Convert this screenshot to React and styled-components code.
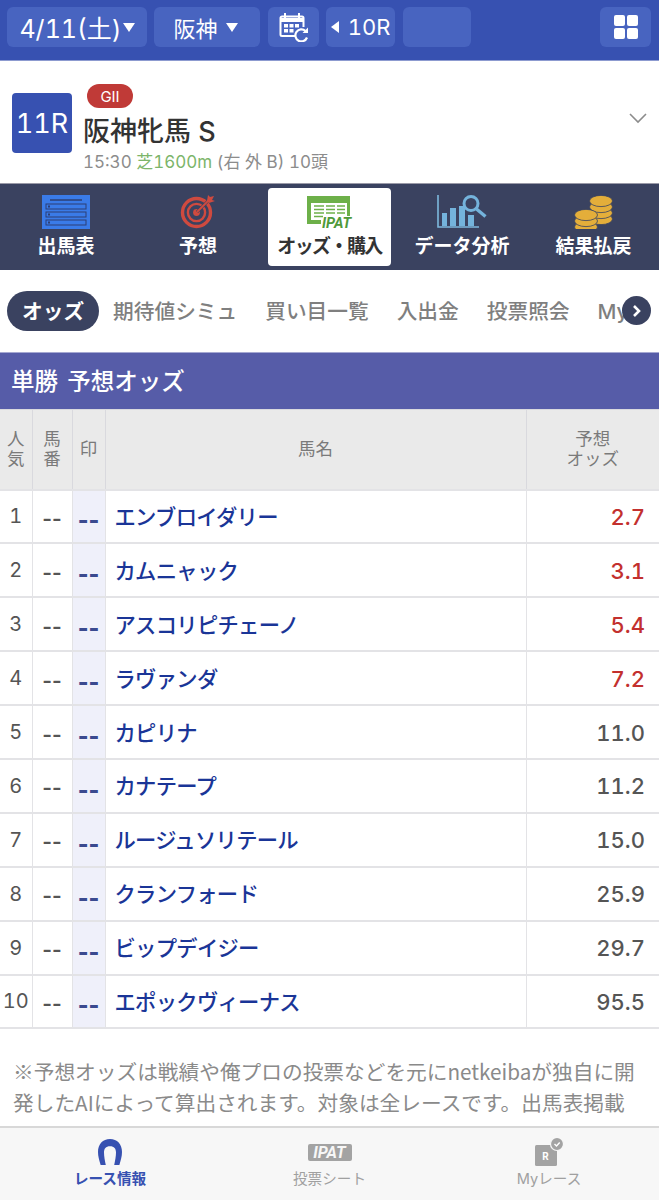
import React from "react";
import styled, { createGlobalStyle } from "styled-components";

const Global = createGlobalStyle`
  html, body { margin: 0; padding: 0; background: #fff; }
  body {
    font-family: "Inter", "Noto Sans CJK JP", "Noto Sans", sans-serif;
    font-variant-numeric: tabular-nums;
    width: 659px;
    height: 1200px;
    overflow: hidden;
  }
  * { box-sizing: border-box; }
`;

const Page = styled.div`
  position: relative;
  width: 659px;
  height: 1200px;
  overflow: hidden;
`;

const TopBar = styled.div`
  height: 61px;
  background: #3751b1;
  display: flex;
  padding: 7px 8px 0 7px;
  gap: 7px;
  border-bottom: 1px solid #8d9bd0;
`;
const TopBtn = styled.div`
  width: ${(p) => p.$w}px;
  height: 40px;
  margin-left: ${(p) => p.$ml || 0}px;
  padding-right: ${(p) => p.$pr || 0}px;
  background: #4864c0;
  border-radius: 6px;
  display: flex;
  align-items: center;
  justify-content: center;
  gap: ${(p) => p.$gap || 0}px;
  color: #fff;
  font-size: ${(p) => p.$size || 22}px;
`;
const TriDown = styled.span`
  width: 0;
  height: 0;
  border-left: 6px solid transparent;
  border-right: 6px solid transparent;
  border-top: 9px solid #fff;
`;
const TriLeft = styled.span`
  width: 0;
  height: 0;
  border-top: 6px solid transparent;
  border-bottom: 6px solid transparent;
  border-right: 8px solid #fff;
`;

const RaceHead = styled.div`
  height: 122px;
  padding: 23px 12px 0 12px;
  display: flex;
  position: relative;
`;
const RaceNum = styled.div`
  width: 60px;
  height: 60px;
  margin-top: 9px;
  background: #3751b1;
  border-radius: 4px;
  color: #fff;
  font-size: 27px;
  display: flex;
  align-items: center;
  justify-content: center;
`;
const RaceInfo = styled.div`
  margin-left: 11px;
`;
const Grade = styled.div`
  width: 46px;
  height: 24px;
  margin-left: 4px;
  border-radius: 12px;
  background: #c03a37;
  color: #fff;
  font-size: 15px;
  display: flex;
  align-items: center;
  justify-content: center;
`;
const RaceName = styled.div`
  font-size: 27px;
  line-height: 36px;
  margin-top: 6px;
  font-weight: 500;
  color: #333;
  white-space: nowrap;
`;
const RaceMeta = styled.div`
  font-size: 17px;
  line-height: 22px;
  margin-top: 1px;
  color: #8c8c8c;
  white-space: nowrap;
`;
const Green = styled.span`
  color: #7cb56a;
`;
const Chevron = styled.svg`
  position: absolute;
  right: 12px;
  top: 51px;
`;

const Nav = styled.div`
  height: 87px;
  background: #3a4260;
  display: grid;
  grid-template-columns: 132px 132px 132px 132px 131px;
  padding-top: 4px;
  border-top: 1px solid #9a9aa8;
`;
const NavItem = styled.div`
  height: 78px;
  margin: ${(p) => (p.$active ? "0 5px 0 4px" : "0")};
  border-radius: 4px;
  background: ${(p) => (p.$active ? "#fff" : "transparent")};
  color: ${(p) => (p.$active ? "#333" : "#fff")};
  font-size: 19px;
  font-weight: 700;
  display: flex;
  flex-direction: column;
  align-items: center;
  white-space: nowrap;
`;
const NavIcon = styled.div`
  height: 41px;
  display: flex;
  align-items: flex-end;
  justify-content: center;
`;
const NavLabel = styled.div`
  line-height: 26px;
  margin-top: 5px;
  letter-spacing: ${(p) => (p.$tight ? "-1.600px" : "0")};
`;

const SubTabs = styled.div`
  height: 82px;
  position: relative;
  padding: 21px 0 0 7px;
`;
const SubTrack = styled.div`
  width: 628px;
  display: flex;
  overflow: hidden;
  white-space: nowrap;
`;
const SubTab = styled.div`
  flex: none;
  height: 40px;
  padding: 0 ${(p) => (p.$active ? "15px" : "14px")};
  border-radius: 20px;
  background: ${(p) => (p.$active ? "#3a4260" : "transparent")};
  color: ${(p) => (p.$active ? "#fff" : "#7f7f7f")};
  font-size: 20.700px;
  font-weight: ${(p) => (p.$active ? 700 : 500)};
  line-height: 42px;
`;
const ScrollBtn = styled.div`
  position: absolute;
  left: 622px;
  top: 26px;
  width: 29px;
  height: 29px;
  border-radius: 50%;
  background: #3a4260;
  display: flex;
  align-items: center;
  justify-content: center;
`;

const TitleBar = styled.div`
  height: 57px;
  background: #565ca8;
  border-top: 1px solid #a5a8d2;
  color: #fff;
  font-size: 23.500px;
  font-weight: 500;
  padding-left: 11px;
  line-height: 57px;
  word-spacing: 3px;
`;

const Table = styled.table`
  width: 659px;
  table-layout: fixed;
  border-collapse: collapse;
`;
const Th = styled.th`
  height: 80px;
  padding: 0;
  background: #eaeaea;
  border: 1px solid #d9d9de;
  border-left: ${(p) => (p.$first ? "none" : "1px solid #d9d9de")};
  border-right: ${(p) => (p.$last ? "none" : "1px solid #d9d9de")};
  color: #7a7a7a;
  font-size: 17.500px;
  font-weight: 400;
  line-height: 20px;
  text-align: center;
`;
const Td = styled.td`
  height: 53.900px;
  padding: 0;
  border: 2px solid #e3e3e6;
  border-width: 2px 1.500px;
  border-left: ${(p) => (p.$first ? "none" : "")};
  border-right: ${(p) => (p.$last ? "none" : "")};
  text-align: center;
  color: #555;
  font-size: 20px;
`;
const DashCell = styled(Td)`
  font-variant-numeric: normal;
  font-feature-settings: "calt" 0;
  font-size: 21px;
  font-weight: 600;
  padding-top: 4px;
`;
const MarkCell = styled(Td)`
  background: #eff0fa;
  color: #3a4a8f;
  font-variant-numeric: normal;
  font-feature-settings: "calt" 0;
  font-size: 23px;
  font-weight: 800;
  padding-top: 8px;
`;
const NameCell = styled(Td)`
  text-align: left;
  padding: 0 0 2px 9px;
  color: #1a3597;
  font-size: 21.300px;
  letter-spacing: -0.700px;
  font-weight: 500;
  white-space: nowrap;
`;
const OddsCell = styled(Td)`
  text-align: right;
  padding: 1px 14px 0 0;
  font-size: 22px;
  font-weight: 500;
  color: ${(p) => (p.$hot ? "#c3302e" : "#555")};
`;

const Note = styled.p`
  margin: 27px 12px 0 13px;
  color: #8a8a8a;
  font-family: "Noto Sans CJK JP", sans-serif;
  font-size: 20.700px;
  line-height: 31px;
`;

const Footer = styled.div`
  position: absolute;
  left: 0;
  right: 0;
  bottom: 0;
  height: 74px;
  background: #f7f7f7;
  border-top: 2px solid #d8d8d8;
  display: grid;
  grid-template-columns: 220px 219px 220px;
`;
const FootItem = styled.div`
  display: flex;
  flex-direction: column;
  align-items: center;
  color: ${(p) => (p.$active ? "#3751b1" : "#a0a0a0")};
  font-size: 14.600px;
  font-weight: ${(p) => (p.$active ? 700 : 400)};
`;
const FootIcon = styled.div`
  height: 38px;
  display: flex;
  align-items: flex-end;
  justify-content: center;
`;
const FootLabel = styled.div`
  line-height: 20px;
  margin-top: 3px;
`;

const CalendarIcon = () => (
  <svg width="30" height="30" viewBox="0 0 30 30" fill="none" stroke="#fff" strokeWidth="2">
    <path d="M16 24H3a1.500 1.500 0 0 1-1.500-1.500V6A1.500 1.500 0 0 1 3 4.500h20A1.500 1.500 0 0 1 24.500 6v9" />
    <path d="M1.500 8h23" strokeWidth="4" />
    <path d="M6 1v6M20 1v6" />
    <path
      d="M5 12h4v3.500H5zM10.500 12h4v3.500h-4zM16 12h4v3.500h-4zM5 17h4v3.500H5zM10.500 17h4v3.500h-4z"
      fill="#fff"
      stroke="none"
    />
    <path d="M28 25.500a6 6 0 1 1-1.500-6.500" strokeWidth="2.200" />
    <path d="M29 15.500v5.500h-5.500z" fill="#fff" stroke="none" />
  </svg>
);

const GridIcon = () => (
  <svg width="24" height="24" viewBox="0 0 24 24" fill="#fff">
    <rect x="0" y="0" width="11" height="11" rx="2" />
    <rect x="13" y="0" width="11" height="11" rx="2" />
    <rect x="0" y="13" width="11" height="11" rx="2" />
    <rect x="13" y="13" width="11" height="11" rx="2" />
  </svg>
);

const ListIcon = () => (
  <svg width="48" height="34" viewBox="0 0 48 34">
    <rect width="48" height="34" fill="#3a7be8" />
    <g fill="none" stroke="#2c3f74" strokeWidth="1">
      <path d="M8 5h32" strokeWidth="1.500" />
      <rect x="4" y="9" width="40" height="5" />
      <rect x="4" y="17" width="40" height="5" />
      <rect x="4" y="25" width="40" height="5" />
    </g>
    <g fill="#2c3f74">
      <rect x="6" y="10.500" width="2" height="2" />
      <rect x="6" y="18.500" width="2" height="2" />
      <rect x="6" y="26.500" width="2" height="2" />
    </g>
  </svg>
);

const TargetIcon = () => (
  <svg width="36" height="36" viewBox="0 0 36 36" fill="none" stroke="#cf4a3f">
    <circle cx="16.500" cy="19.500" r="14" strokeWidth="3.400" />
    <circle cx="16.500" cy="19.500" r="8.600" strokeWidth="2.400" />
    <circle cx="16.500" cy="19.500" r="3.400" fill="#cf4a3f" stroke="none" />
    <path d="M17 19L30 6" stroke="#3a4260" strokeWidth="3" />
    <path d="M17 19L29 7" strokeWidth="1.800" />
    <path d="M27 8l1-6 2 2 4-1-2 4 3 1-6 2z" fill="#cf4a3f" stroke="none" />
  </svg>
);

const IpatSheetIcon = () => (
  <svg width="46" height="33" viewBox="0 0 46 33">
    <path d="M0 0h43v20h-3V7H4v17h10v4H0z" fill="#6db049" />
    <g fill="none" stroke="#6db049" strokeWidth="1.700">
      <path d="M7 10h10M19 10h9M30 10h8M7 13.500h10M19 13.500h9M30 13.500h8M7 17h10M19 17h9M30 17h8M7 20.500h9" />
    </g>
    <text x="15" y="32" fontFamily="Roboto, sans-serif" fontSize="14.500" fontWeight="700" fontStyle="italic" fill="#4f9a3a">
      IPAT
    </text>
  </svg>
);

const ChartIcon = () => (
  <svg width="50" height="34" viewBox="0 0 50 34">
    <path d="M1 0v32h41" fill="none" stroke="#7db8dd" strokeWidth="1.600" />
    <g fill="#74b3dc">
      <rect x="5" y="18" width="5" height="13" />
      <rect x="13" y="13" width="6" height="18" />
      <rect x="22" y="11" width="6" height="20" />
      <rect x="31" y="20" width="6" height="11" />
    </g>
    <circle cx="34" cy="8.500" r="7" fill="#3a4260" stroke="#74b3dc" strokeWidth="3" />
    <path d="M39.500 14l9 7.500" stroke="#74b3dc" strokeWidth="3.400" />
  </svg>
);

const CoinStack = ({ x, y, n }) => (
  <g>
    {Array.from({ length: n }).map((_, i) => (
      <ellipse key={i} cx={x} cy={y + (n - 1 - i) * 6} rx="11.500" ry="5.600" fill="#e4ae3a" stroke="#3a4260" strokeWidth="0.800" />
    ))}
  </g>
);

const CoinsIcon = () => (
  <svg width="40" height="34" viewBox="0 0 40 34">
    <CoinStack x={27} y={6} n={4} />
    <CoinStack x={12} y={20} n={3} />
  </svg>
);

const HorseshoeIcon = () => (
  <svg width="24" height="27" viewBox="0 0 20 28" preserveAspectRatio="none">
    <path
      d="M6.500 27H2.200C1 22 0 18 0 13.500 0 5.500 4 0 10 0s10 5.500 10 13.500c0 4.500-1 8.500-2.200 13.500h-4.300c.7-4 1.500-9 1.500-13 0-4-1.500-6.500-5-6.500s-5 2.500-5 6.500c0 4 .8 9 1.500 13z"
      fill="#3751b1"
    />
  </svg>
);

const IpatTag = styled.div`
  width: 44px;
  height: 17px;
  margin-bottom: 5px;
  background: #a3a3a3;
  border-radius: 2px;
  color: #f7f7f7;
  font-family: "Roboto", sans-serif;
  font-size: 16px;
  font-weight: 700;
  font-style: italic;
  line-height: 17px;
  text-align: center;
`;

const MyRaceIcon = () => (
  <svg width="30" height="28" viewBox="0 0 30 28">
    <rect x="1" y="7" width="22" height="21" rx="1.500" fill="#a3a3a3" />
    <text x="11.500" y="22" textAnchor="middle" fontFamily="Roboto, sans-serif" fontSize="10" fontWeight="700" fill="#fff">
      R
    </text>
    <circle cx="23" cy="6" r="6.500" fill="#a3a3a3" stroke="#f7f7f7" strokeWidth="1.200" />
    <path d="M20.500 6l2 2 3.200-3.500" fill="none" stroke="#fff" strokeWidth="1.400" />
  </svg>
);

const horses = [
  ["エンブロイダリー", "2.7", true],
  ["カムニャック", "3.1", true],
  ["アスコリピチェーノ", "5.4", true],
  ["ラヴァンダ", "7.2", true],
  ["カピリナ", "11.0"],
  ["カナテープ", "11.2"],
  ["ルージュソリテール", "15.0"],
  ["クランフォード", "25.9"],
  ["ビップデイジー", "29.7"],
  ["エポックヴィーナス", "95.5"],
];

export default function App() {
  return (
    <Page>
      <Global />
      <TopBar>
        <TopBtn $w={140} $gap={1} $size={25}>
          4/11(土)
          <TriDown />
        </TopBtn>
        <TopBtn $w={106} $gap={8} $pr={3}>
          阪神
          <TriDown />
        </TopBtn>
        <TopBtn $w={51} $ml={1}>
          <CalendarIcon />
        </TopBtn>
        <TopBtn $w={69} $gap={9}>
          <TriLeft />
          10R
        </TopBtn>
        <TopBtn $w={68} $ml={1} />
        <TopBtn $w={51} $ml={122}>
          <GridIcon />
        </TopBtn>
      </TopBar>

      <RaceHead>
        <RaceNum>11R</RaceNum>
        <RaceInfo>
          <Grade>GII</Grade>
          <RaceName>阪神牝馬 S</RaceName>
          <RaceMeta>
            15:30 <Green>芝1600m</Green> (右 外 B) 10頭
          </RaceMeta>
        </RaceInfo>
        <Chevron width="18" height="12" viewBox="0 0 18 12" fill="none" stroke="#8c8c8c" strokeWidth="1.600">
          <path d="M1 2l8 8 8-8" />
        </Chevron>
      </RaceHead>

      <Nav>
        <NavItem>
          <NavIcon><ListIcon /></NavIcon>
          <NavLabel>出馬表</NavLabel>
        </NavItem>
        <NavItem>
          <NavIcon><TargetIcon /></NavIcon>
          <NavLabel>予想</NavLabel>
        </NavItem>
        <NavItem $active>
          <NavIcon><IpatSheetIcon /></NavIcon>
          <NavLabel $tight>オッズ・購入</NavLabel>
        </NavItem>
        <NavItem>
          <NavIcon><ChartIcon /></NavIcon>
          <NavLabel>データ分析</NavLabel>
        </NavItem>
        <NavItem>
          <NavIcon><CoinsIcon /></NavIcon>
          <NavLabel>結果払戻</NavLabel>
        </NavItem>
      </Nav>

      <SubTabs>
        <SubTrack>
          <SubTab $active>オッズ</SubTab>
          <SubTab>期待値シミュ</SubTab>
          <SubTab>買い目一覧</SubTab>
          <SubTab>入出金</SubTab>
          <SubTab>投票照会</SubTab>
          <SubTab>Myレース</SubTab>
        </SubTrack>
        <ScrollBtn>
          <svg width="12" height="14" viewBox="0 0 12 14" fill="none" stroke="#fff" strokeWidth="2.600">
            <path d="M3 2l5 5-5 5" />
          </svg>
        </ScrollBtn>
      </SubTabs>

      <TitleBar>単勝 予想オッズ</TitleBar>

      <Table>
        <colgroup>
          <col width="32" />
          <col width="40" />
          <col width="33" />
          <col width="421" />
          <col width="133" />
        </colgroup>
        <thead>
          <tr>
            <Th $first>人<br />気</Th>
            <Th>馬<br />番</Th>
            <Th>印</Th>
            <Th>馬名</Th>
            <Th $last>予想<br />オッズ</Th>
          </tr>
        </thead>
        <tbody>
          {horses.map(([name, odds, hot], i) => (
            <tr key={name}>
              <Td $first>{i + 1}</Td>
              <DashCell>--</DashCell>
              <MarkCell>--</MarkCell>
              <NameCell>{name}</NameCell>
              <OddsCell $last $hot={hot}>{odds}</OddsCell>
            </tr>
          ))}
        </tbody>
      </Table>

      <Note>
        ※予想オッズは戦績や俺プロの投票などを元にnetkeibaが独自に開発したAIによって算出されます。対象は全レースです。出馬表掲載
      </Note>

      <Footer>
        <FootItem $active>
          <FootIcon><HorseshoeIcon /></FootIcon>
          <FootLabel>レース情報</FootLabel>
        </FootItem>
        <FootItem>
          <FootIcon><IpatTag>IPAT</IpatTag></FootIcon>
          <FootLabel>投票シート</FootLabel>
        </FootItem>
        <FootItem>
          <FootIcon><MyRaceIcon /></FootIcon>
          <FootLabel>Myレース</FootLabel>
        </FootItem>
      </Footer>
    </Page>
  );
}
